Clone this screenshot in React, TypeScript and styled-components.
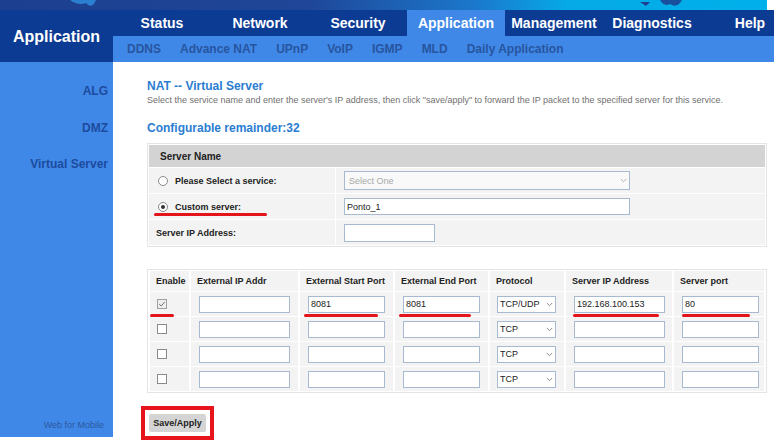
import React from 'react';
import styled, { createGlobalStyle } from 'styled-components';

const GlobalStyle = createGlobalStyle`
  html, body { margin: 0; padding: 0; background: #fff; }
  body { font-family: "Liberation Sans", Arial, sans-serif; }
  * { box-sizing: border-box; }
`;

const NAVY = '#0c3b93';
const LIGHT = '#4088e8';

const Page = styled.div`
  width: 767px;
`;

const Banner = styled.div`
  height: 10px;
  background: linear-gradient(90deg, #1d3f8f 0%, #1f4698 40%, #1b78cc 62%, #05aae6 74%, #00b0ea 100%);
  overflow: hidden;
  svg { display: block; }
`;

const Header = styled.div`
  display: grid;
  grid-template-columns: 113px 1fr;
  height: 52px;
`;

const Brand = styled.div`
  background: ${NAVY};
  color: #fff;
  font-weight: bold;
  font-size: 16px;
  display: flex;
  align-items: center;
  justify-content: center;
  padding-top: 1px;
`;

const NavArea = styled.div`
  display: flex;
  flex-direction: column;
`;

const TopNav = styled.div`
  display: flex;
  height: 26px;
  background: ${NAVY};
`;

const Tab = styled.div<{ $active?: boolean; $grow?: boolean }>`
  width: 98px;
  flex: ${(p) => (p.$grow ? '1' : '0 0 98px')};
  display: flex;
  align-items: center;
  justify-content: center;
  color: #fff;
  font-weight: bold;
  font-size: 14px;
  background: ${(p) => (p.$active ? LIGHT : 'transparent')};
`;

const SubNav = styled.div`
  display: flex;
  align-items: center;
  gap: 19px;
  height: 26px;
  padding-left: 14px;
  background: ${LIGHT};
`;

const SubItem = styled.span`
  font-size: 12px;
  font-weight: bold;
  color: #27559f;
`;

const Body = styled.div`
  display: grid;
  grid-template-columns: 113px 1fr;
`;

const Sidebar = styled.div`
  height: 375px;
  background: ${LIGHT};
  display: flex;
  flex-direction: column;
  align-items: flex-end;
  padding: 22px 5px 6px 0;
`;

const SideItem = styled.div`
  font-size: 12px;
  line-height: 14px;
  font-weight: bold;
  color: #1c4b9e;
  margin-bottom: 22.5px;
`;

const Mobile = styled.div`
  margin-top: auto;
  margin-right: 4px;
  font-size: 9px;
  line-height: 11px;
  color: #2b589f;
`;

const Content = styled.div`
  position: relative;
  padding: 17px 1px 0 34px;
`;

const Title = styled.div`
  font-size: 12px;
  line-height: 14px;
  font-weight: bold;
  color: #2b7dd2;
`;

const Desc = styled.div`
  margin-top: 2px;
  font-size: 9px;
  line-height: 11px;
  color: #707070;
  white-space: nowrap;
`;

const Remainder = styled(Title)`
  margin-top: 15px;
`;

const Table = styled.table`
  width: 620px;
  table-layout: fixed;
  border-collapse: separate;
  border-spacing: 1px;
  border: 1px solid #e4e4e4;
  background: #fff;
`;

const ServerTable = styled(Table)`
  margin-top: 8px;
`;

const PortTable = styled(Table)`
  margin-top: 22px;
  border-spacing: 2px 1px;
`;

const HeadCell = styled.th<{ $gray?: boolean }>`
  height: ${(p) => (p.$gray ? '22px' : '20px')};
  background: ${(p) => (p.$gray ? '#d3d3d3' : '#f3f3f3')};
  text-align: left;
  font-size: ${(p) => (p.$gray ? '10px' : '9px')};
  font-weight: bold;
  color: #222;
  padding: 0 0 0 ${(p) => (p.$gray ? '11px' : '6px')};
  white-space: nowrap;
`;

const Cell = styled.td<{ $pad?: number; $h?: number }>`
  height: ${(p) => p.$h ?? 25}px;
  background: #f3f3f3;
  padding: 0 0 0 ${(p) => p.$pad ?? 8}px;
  font-size: 9px;
  font-weight: bold;
  color: #222;
  vertical-align: middle;
  white-space: nowrap;
`;

const RadioLabel = styled.label`
  display: flex;
  align-items: center;
  gap: 7px;
`;

const Radio = styled.span<{ $on?: boolean }>`
  width: 10px;
  height: 10px;
  border-radius: 50%;
  border: 1px solid #8a8a8a;
  background: #fff;
  display: flex;
  align-items: center;
  justify-content: center;
  &::after {
    content: '';
    width: 4px;
    height: 4px;
    border-radius: 50%;
    background: ${(p) => (p.$on ? '#333' : 'transparent')};
  }
`;

const Field = styled.input<{ $w: number; $h?: number }>`
  display: block;
  width: ${(p) => p.$w}px;
  height: ${(p) => p.$h ?? 17}px;
  border: 1px solid #a8bad1;
  background: #fff;
  padding: 0 2px;
  font-family: "Liberation Sans", Arial, sans-serif;
  font-size: 9px;
  color: #222;
  outline: none;
`;

const SelectBox = styled.div<{ $w: number; $h?: number; $muted?: boolean }>`
  width: ${(p) => p.$w}px;
  height: ${(p) => p.$h ?? 17}px;
  border: 1px solid #a8bad1;
  background: ${(p) => (p.$muted ? '#f9f9f9' : '#fff')};
  display: flex;
  align-items: center;
  padding: 0 2px 0 ${(p) => (p.$muted ? 4 : 2)}px;
  font-size: 9px;
  font-weight: normal;
  color: ${(p) => (p.$muted ? '#a8a8a8' : '#222')};
  white-space: nowrap;
`;

const SelectText = styled.span`
  flex: 1;
  min-width: 0;
`;

const Check = styled.span<{ $on?: boolean }>`
  display: flex;
  width: 10px;
  height: 10px;
  border: 1px solid ${(p) => (p.$on ? '#a0a0a0' : '#8a8a8a')};
  background: ${(p) => (p.$on ? '#eee' : '#fff')};
  align-items: center;
  justify-content: center;
`;

const Mark = styled.div`
  position: absolute;
  height: 3px;
  border-radius: 2px;
  background: #e4141b;
`;

const SaveFrame = styled.div`
  display: inline-flex;
  margin: 13px 0 0 -6px;
  padding: 4px;
  border: 4px solid #e8141c;
`;

const SaveButton = styled.button`
  width: 57px;
  height: 18px;
  border: none;
  border-radius: 2px;
  background: #d4d4d4;
  font-family: "Liberation Sans", Arial, sans-serif;
  font-size: 9px;
  font-weight: bold;
  color: #222;
  padding: 0;
`;

const Chevron = ({ color = '#8c8c8c' }: { color?: string }) => (
  <svg width="7" height="5" viewBox="0 0 7 5" style={{ flex: 'none', display: 'block' }}>
    <path d="M0.8 1 L3.5 3.7 L6.2 1" fill="none" stroke={color} strokeWidth="1" />
  </svg>
);

const Tick = () => (
  <svg width="8" height="8" viewBox="0 0 8 8">
    <path d="M1.2 4.2 L3.2 6 L6.8 1.8" fill="none" stroke="#777" strokeWidth="1" />
  </svg>
);

const tabs = ['Status', 'Network', 'Security', 'Application', 'Management', 'Diagnostics', 'Help'];
const subs = ['DDNS', 'Advance NAT', 'UPnP', 'VoIP', 'IGMP', 'MLD', 'Daily Application'];

type Rule = { on: boolean; start: string; end: string; proto: string; ip: string; port: string };
const rules: Rule[] = [
  { on: true, start: '8081', end: '8081', proto: 'TCP/UDP', ip: '192.168.100.153', port: '80' },
  { on: false, start: '', end: '', proto: 'TCP', ip: '', port: '' },
  { on: false, start: '', end: '', proto: 'TCP', ip: '', port: '' },
  { on: false, start: '', end: '', proto: 'TCP', ip: '', port: '' },
];

const marks = [
  { left: 41, top: 151, width: 113 },
  { left: 37, top: 252, width: 24 },
  { left: 191, top: 252, width: 74 },
  { left: 286, top: 252, width: 72 },
  { left: 460, top: 252, width: 86 },
  { left: 569, top: 252, width: 68 },
];

export default function App() {
  return (
    <Page>
      <GlobalStyle />
      <Banner>
        <svg width="767" height="10" viewBox="0 0 767 10">
          <path d="M70 0 Q78 6 86 3 Q90 8 94 4 L96 0 Z" fill="#2f8fe0" opacity="0.8" />
          <path d="M640 2 L646 6 L650 2 Z" fill="#1d3f8f" />
          <path d="M660 0 Q664 7 670 4 Q676 8 680 3 L682 0 Z" fill="#1d3f8f" opacity="0.85" />
        </svg>
      </Banner>
      <Header>
        <Brand>Application</Brand>
        <NavArea>
          <TopNav>
            {tabs.map((t, i) => (
              <Tab key={t} $active={t === 'Application'} $grow={i === tabs.length - 1}>
                {t}
              </Tab>
            ))}
          </TopNav>
          <SubNav>
            {subs.map((s) => (
              <SubItem key={s}>{s}</SubItem>
            ))}
          </SubNav>
        </NavArea>
      </Header>
      <Body>
        <Sidebar>
          <SideItem>ALG</SideItem>
          <SideItem>DMZ</SideItem>
          <SideItem>Virtual Server</SideItem>
          <Mobile>Web for Mobile</Mobile>
        </Sidebar>
        <Content>
          <Title>NAT -- Virtual Server</Title>
          <Desc>
            Select the service name and enter the server's IP address, then click "save/apply" to forward the IP packet to the specified server for this service.
          </Desc>
          <Remainder>Configurable remainder:32</Remainder>

          <ServerTable>
            <colgroup>
              <col style={{ width: 186 }} />
              <col />
            </colgroup>
            <thead>
              <tr>
                <HeadCell $gray colSpan={2}>Server Name</HeadCell>
              </tr>
            </thead>
            <tbody>
              <tr>
                <Cell $pad={9}>
                  <RadioLabel>
                    <Radio />
                    Please Select a service:
                  </RadioLabel>
                </Cell>
                <Cell>
                  <SelectBox $w={286} $h={19} $muted>
                    <SelectText>Select One</SelectText>
                    <Chevron color="#b0b0b0" />
                  </SelectBox>
                </Cell>
              </tr>
              <tr>
                <Cell $pad={9}>
                  <RadioLabel>
                    <Radio $on />
                    Custom server:
                  </RadioLabel>
                </Cell>
                <Cell>
                  <Field $w={286} defaultValue="Ponto_1" />
                </Cell>
              </tr>
              <tr>
                <Cell $pad={7}>Server IP Address:</Cell>
                <Cell>
                  <Field $w={91} $h={18} defaultValue="" />
                </Cell>
              </tr>
            </tbody>
          </ServerTable>

          <PortTable>
            <colgroup>
              <col style={{ width: 39 }} />
              <col style={{ width: 107 }} />
              <col style={{ width: 93 }} />
              <col style={{ width: 93 }} />
              <col style={{ width: 74 }} />
              <col style={{ width: 106 }} />
              <col />
            </colgroup>
            <thead>
              <tr>
                <HeadCell>Enable</HeadCell>
                <HeadCell>External IP Addr</HeadCell>
                <HeadCell>External Start Port</HeadCell>
                <HeadCell>External End Port</HeadCell>
                <HeadCell>Protocol</HeadCell>
                <HeadCell>Server IP Address</HeadCell>
                <HeadCell>Server port</HeadCell>
              </tr>
            </thead>
            <tbody>
              {rules.map((r, i) => (
                <tr key={i}>
                  <Cell $h={24} $pad={7}>
                    <Check $on={r.on}>{r.on && <Tick />}</Check>
                  </Cell>
                  <Cell $h={24}>
                    <Field $w={91} defaultValue="" />
                  </Cell>
                  <Cell $h={24}>
                    <Field $w={77} defaultValue={r.start} />
                  </Cell>
                  <Cell $h={24}>
                    <Field $w={77} defaultValue={r.end} />
                  </Cell>
                  <Cell $h={24} $pad={7}>
                    <SelectBox $w={59}>
                      <SelectText>{r.proto}</SelectText>
                      <Chevron />
                    </SelectBox>
                  </Cell>
                  <Cell $h={24}>
                    <Field $w={91} defaultValue={r.ip} />
                  </Cell>
                  <Cell $h={24}>
                    <Field $w={77} defaultValue={r.port} />
                  </Cell>
                </tr>
              ))}
            </tbody>
          </PortTable>

          <SaveFrame>
            <SaveButton>Save/Apply</SaveButton>
          </SaveFrame>

          {marks.map((m, i) => (
            <Mark key={i} style={{ left: m.left, top: m.top, width: m.width }} />
          ))}
        </Content>
      </Body>
    </Page>
  );
}
